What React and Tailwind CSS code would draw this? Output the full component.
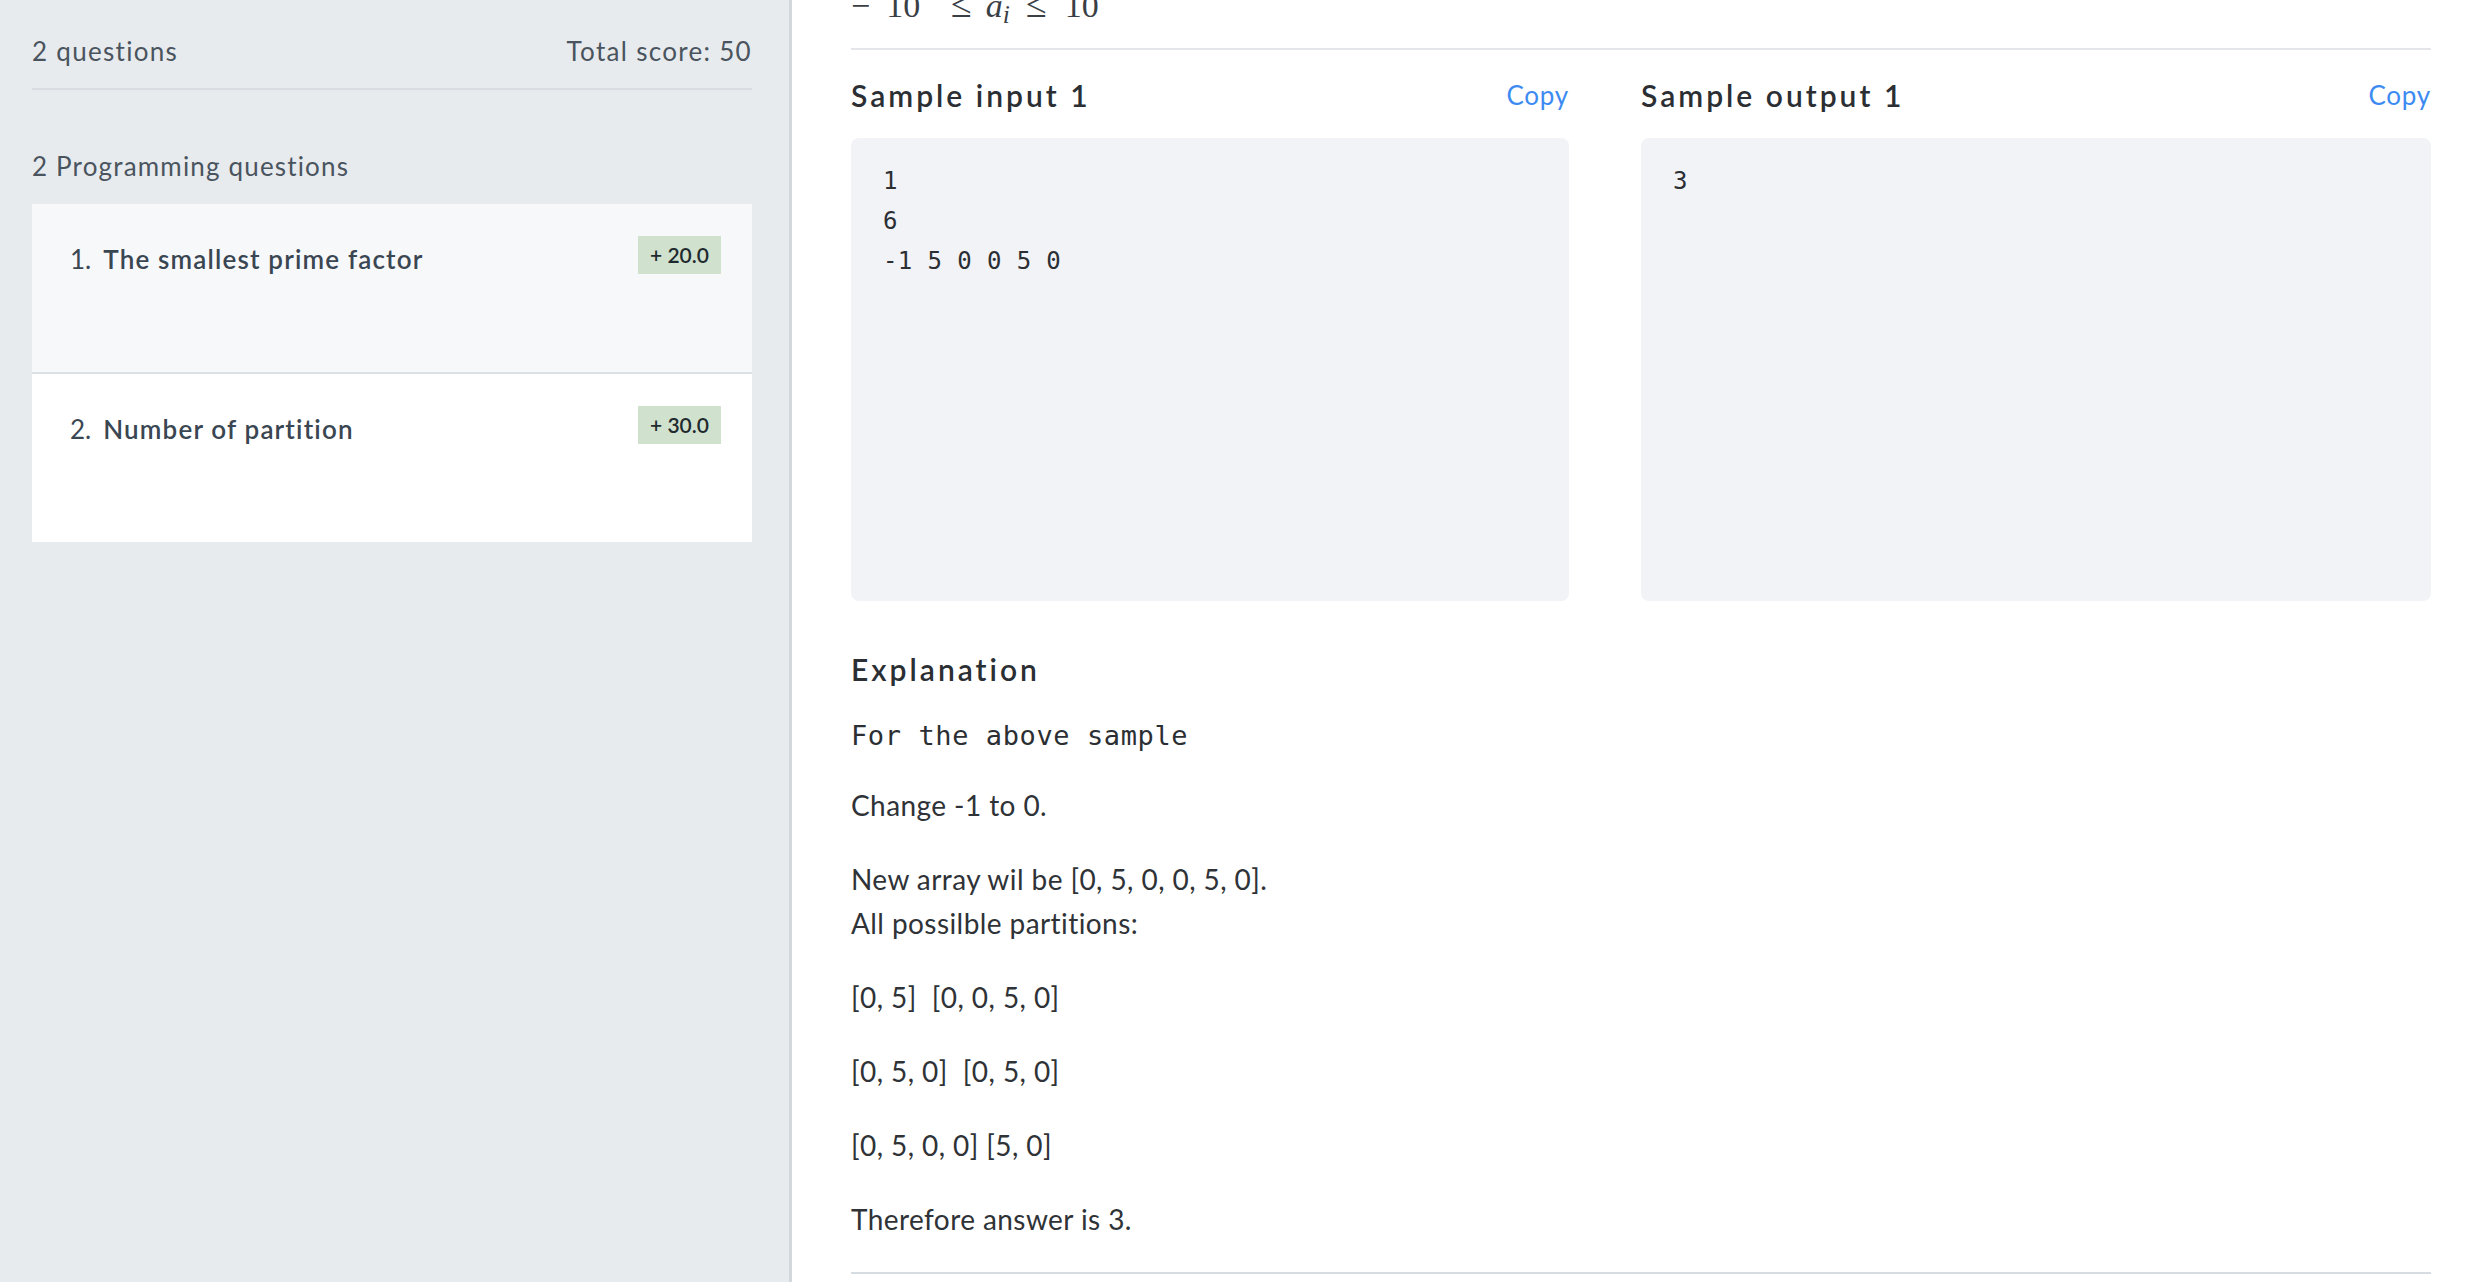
import React from 'react'

const questions = [
  { n: '1.', title: 'The smallest prime factor', score: '+ 20.0', active: true },
  { n: '2.', title: 'Number of partition', score: '+ 30.0', active: false },
]

function SampleBlock({ title, lines, className = '' }) {
  return (
    <div className={className}>
      <div className="mt-[25px] flex h-[40px] items-center justify-between">
        <h3 className="text-[30px] font-semibold tracking-[0.1em] text-[#2b2f34]">{title}</h3>
        <button className="text-[26px] tracking-[0.03em] text-[#3d8bf2]">Copy</button>
      </div>
      <div className="mt-[23px] h-[463px] rounded-lg bg-[#f2f3f7] px-[32px] pt-[23px] text-[24px] leading-[40px] tracking-[0.4px] text-[#2b2f33] [font-family:'DejaVu_Sans_Mono',monospace]">
        {lines.map((l, i) => (
          <div key={i} className="whitespace-pre">{l}</div>
        ))}
      </div>
    </div>
  )
}

export default function App() {
  return (
    <div className="flex h-[1282px] overflow-hidden bg-white [font-family:Lato,sans-serif]">
      {/* Sidebar */}
      <aside className="w-[792px] shrink-0 border-r-[3px] border-[#d2d7dc] bg-[#e8ebee] pl-[32px] pr-[37px] pt-[33px]">
        <div className="flex h-[36px] items-center justify-between text-[26px] tracking-[0.05em] text-[#4a545e]">
          <span>2 questions</span>
          <span>Total score: 50</span>
        </div>
        <div className="mt-[19px] h-[2px] bg-[#d9dde1]" />
        <div className="mt-[58px] h-[36px] text-[26px] leading-[36px] tracking-[0.045em] text-[#4a545e]">
          2 Programming questions
        </div>
        <div className="mt-[20px]">
          {questions.map((q, i) => (
            <div
              key={i}
              className={`flex items-start justify-between pl-[38px] pr-[31px] pt-[32px] ${
                q.active ? 'bg-[#f7f8fa]' : 'bg-white'
              } ${i === 0 ? 'h-[170px] border-b-2 border-[#dde1e5]' : 'h-[168px]'}`}
            >
              <div className="pt-[5px] text-[26px] leading-[36px] text-[#3a4652]">
                <span className="mr-[12px]">{q.n}</span>
                <span className="font-semibold tracking-[0.045em]">{q.title}</span>
              </div>
              <span className="flex h-[38px] w-[83px] items-center justify-center bg-[#d0e2ce] text-[21px] font-semibold text-[#1f2a2f]">
                {q.score}
              </span>
            </div>
          ))}
        </div>
      </aside>

      {/* Main */}
      <main className="min-w-0 flex-1 pl-[59px] pr-[55px] text-[#2f3337]">
        {/* constraint line, scrolled mostly out of view */}
        <div className="-mt-[14px] h-[36px] whitespace-nowrap text-[34px] leading-[36px] text-[#3a3f45] [font-family:'Liberation_Serif',serif]">
          <span>−</span>
          <span className="ml-[16px]">10</span>
          <sup className="top-[-34px]">9</sup>
          <span className="ml-[18px] text-[38px]">≤</span>
          <span className="ml-[14px] italic">a</span>
          <sub className="italic">i</sub>
          <span className="ml-[16px] text-[38px]">≤</span>
          <span className="ml-[18px]">10</span>
          <sup className="top-[-34px]">9</sup>
        </div>
        <div className="mt-[26px] h-[2px] bg-[#e4e6e9]" />

        <div className="grid grid-cols-2">
          <SampleBlock title="Sample input 1" lines={['1', '6', '-1 5 0 0 5 0']} className="pr-[72px]" />
          <SampleBlock title="Sample output 1" lines={['3']} />
        </div>

        <h3 className="mt-[48px] h-[40px] text-[30px] font-semibold leading-[40px] tracking-[0.1em] text-[#2b2f34]">
          Explanation
        </h3>
        <div className="mt-[27px] text-[27px] leading-[40px] tracking-[0.6px] text-[#2b2f33] [font-family:'DejaVu_Sans_Mono',monospace]">
          For the above sample
        </div>
        <div className="text-[28px] leading-[44px] tracking-[0.015em]">
          <p className="mt-[27px]">Change -1 to 0.</p>
          <p className="mt-[30px]">
            New array wil be [0, 5, 0, 0, 5, 0].
            <br />
            All possilble partitions:
          </p>
          <p className="mt-[30px]">[0, 5]{'\u00a0'} [0, 0, 5, 0]</p>
          <p className="mt-[30px]">[0, 5, 0]{'\u00a0'} [0, 5, 0]</p>
          <p className="mt-[30px]">[0, 5, 0, 0] [5, 0]</p>
          <p className="mt-[30px]">Therefore answer is 3.</p>
        </div>
        <div className="mt-[31px] h-[2px] bg-[#d7dce2]" />
      </main>
    </div>
  )
}
